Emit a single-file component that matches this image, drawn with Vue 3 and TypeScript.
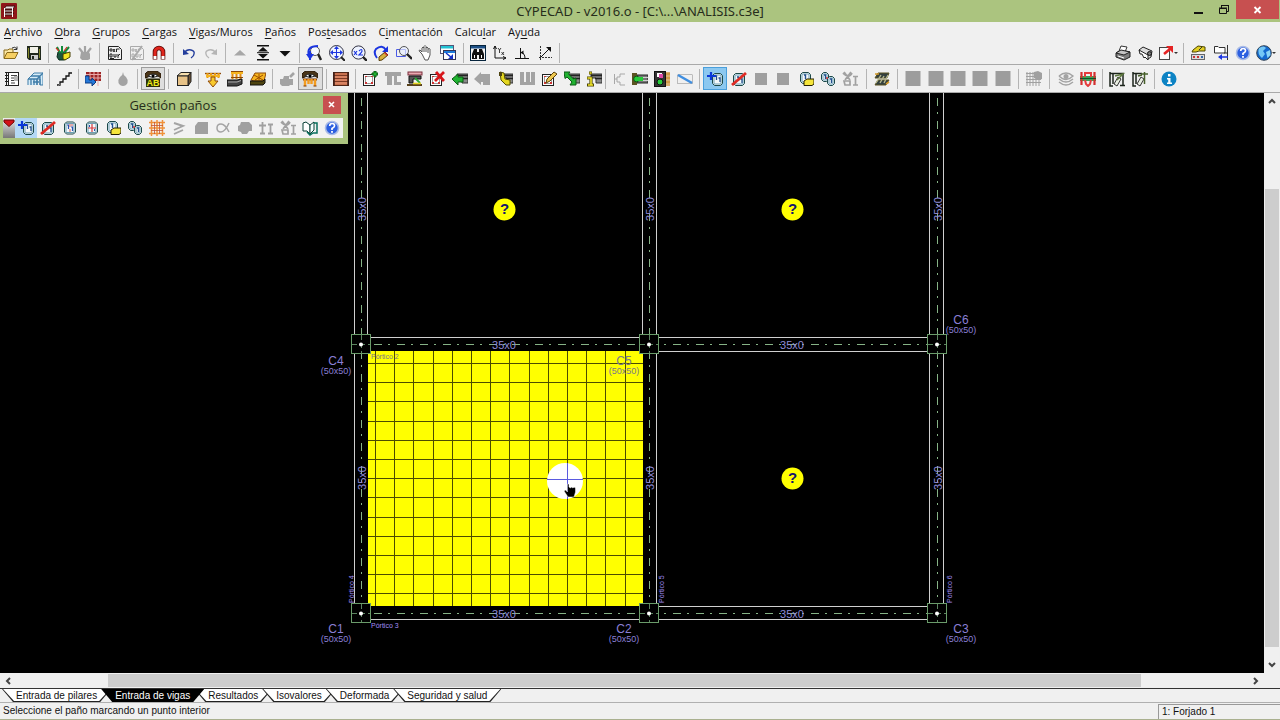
<script setup lang="ts">
import { ref } from 'vue'

interface Tool { icon: string; label: string; sep?: boolean; size?: string; on?: boolean; hot?: boolean; off?: boolean; drop?: boolean }

const K = '#111'
const G = '#a3a3a3'
const box = (x: number, y: number, w: number, h: number, fill: string, stroke = 'none') =>
  `<rect x="${x}" y="${y}" width="${w}" height="${h}" fill="${fill}" stroke="${stroke}"/>`
const line = (d: string, stroke = K, w = 1) => `<path d="${d}" fill="none" stroke="${stroke}" stroke-width="${w}"/>`
const area = (d: string, fill: string, stroke = 'none') => `<path d="${d}" fill="${fill}" stroke="${stroke}"/>`
const disc = (x: number, y: number, r: number, fill: string, stroke = 'none', w = 1) =>
  `<circle cx="${x}" cy="${y}" r="${r}" fill="${fill}" stroke="${stroke}" stroke-width="${w}"/>`
const word = (x: number, y: number, size: number, fill: string, str: string) =>
  `<text x="${x}" y="${y}" font-size="${size}" font-weight="700" text-anchor="middle" font-family="Liberation Sans, Arial, sans-serif" fill="${fill}">${str}</text>`

const slab = (x: number, y: number, w: number, h: number) =>
  area(`M${x + 2} ${y}h${w - 4}l2 2v${h - 4}l-2 2h-${w - 4}l-2-2v-${h - 4}z`, '#f4f8fa', '#1d4a4a') +
  line(`M${x + 1.5} ${y + 1.5}h${w - 3}v${h - 3}h-${w - 3}z`, '#6d9fb4')
const ones = (x: number, y: number, c: string) => line(`M${x} ${y + 1}h1.5v4M${x + 3.5} ${y + 3}h1.5v4`, c, 1.3)
const lens = (x: number, y: number, r: number) =>
  disc(x, y, r, '#f4f8ff', '#555', 1) + line(`M${x + r * 0.7} ${y + r * 0.7}L15 15`, '#222', 2.4)
const eye = area('M0 3Q2 0 5 0h7l4 3v4l-3-2Q8 2 3 6L0 7z', '#4a3518', '#2a1a08') + area('M3 5q5-4 10 0q-5 3-10 0z', '#fff', '#222') + disc(8, 4.8, 1.5, '#000')
const digger = (c: string) => area('M1 8h3l1-3h5v3h4v6h-3l-1 1H3l-2-2z', c) + line('M11 6l4-4', c, 2.6)
const beam = area('M5 3h11v9h-6V7H5z', '#8a8a8a', '#333') + line('M5 4.5h11M9 7.5h7', '#222', 1.4)
const sheet = box(1.5, 3.5, 11, 11, '#fdfdfd', '#222') + line('M3.500 5.500h7v7h-7z', '#999') +
  `<path d="M3 5h2v1H3zM9 5h2v1H9zM3 11h2v2H3zM9 11h2v2H9z" fill="#c33"/>`
const dxf = (c: string) => line('M1.500 1.500h10l3 3v10h-13z', c) + line('M3 4h2v2H3zM6 4l2 3M8 4L6 7M9.5 7V4h3M3 9h2v3H3zM7 9v3h2V9M11 9v4M11 11l2-2M3 13.500h4', c)

const icons: Record<string, string> = {
  open: area('M1 13V5h4l1-1h4v3', '#fbe7a5', '#8a6a1a') + area('M1 13.5L4 7.5h11l-3 6z', '#f6cf63', '#8a6a1a') + line('M9 3q3-2 5 1m0-2.500v3h-3', '#333'),
  save: area('M1 1h14v14H3L1 13z', '#20281c') + box(4, 2, 8, 6, '#f1f1e8') + box(5, 10, 7, 4.5, '#cfcfcf') + box(6, 11, 2, 3, '#20281c') + box(2, 3, 1, 10, '#83862b') + box(13, 4, 1, 9, '#83862b'),
  edit: area('M3 7h8v7l-2 1H4l-2-3z', '#1d5540', '#082a1a') + line('M5 8L2 2M7 8V1M9 8l5-6', '#138a3b', 2) + line('M1 3l3 3M12 2l-3 4', '#d12f20', 1.2) + area('M8 9l7-2v5l-5 3-2-1z', '#f4e324', '#473f00'),
  editOff: area('M4 7h8l1 2v5l-2 1H5l-2-2z', G) + line('M6 8L2 3M8 8V1M10 8l4-5', G, 2.2),
  dxf: dxf('#222'),
  dxfOff: dxf('#aaa') + line('M3 15L13 1', '#aaa', 2),
  magnet: line('M4 14.500V7a4 4 0 0 1 8 0v7.500', '#5b0b08', 4.600) + line('M4 11V7a4 4 0 0 1 8 0v4', '#e0251c', 3) + box(2.5, 11, 3, 3, '#fff') + box(10.5, 11, 3, 3, '#fff'),
  undo: line('M3 8q3-4 7-3q4 1 3 4q0 2-3 4', '#243e9c', 1.400) + area('M2 4l0 6 6-1z', '#243e9c'),
  redo: line('M13 8q-3-4-7-3q-4 1-3 4q0 2 3 4', '#b5b5b5', 1.400) + area('M14 4v6l-6-1z', '#b5b5b5'),
  upOff: area('M2 10.500L8 5l6 5.500z', '#a7a7a7'),
  levels: box(2, 0, 12, 1.500, K) + box(2, 14, 12, 1.500, K) + box(2, 7.200, 12, 1, K) + area('M8 2l5 4.500H3zM8 13.500l5-4.500H3z', K),
  down: area('M2.500 6h11L8 11.500z', K),
  zoomBack: lens(9, 6, 4.500) + line('M3 11Q0 1 12 1M4 6v9', '#1b35e0', 2) + area('M0 9h8l-4 6z', '#1b35e0'),
  zoomAll: disc(7.500, 7.500, 7, '#eef3ff', '#334') + area('M7.500 1l2.500 3H5zM7.500 14l2.500-3H5zM1 7.500L4 5v5zM14 7.500L11 5v5z', '#1b35e0') + line('M7.500 4v7M4 7.500h7', '#1b35e0') + line('M12 12l4 4', '#222', 2),
  zoom2: disc(7.500, 7.500, 6.600, '#eef3ff', '#334') + line('M3 6l3 4M6 6l-3 4M8 6q3-3 3 0q0 1-3 4h4', '#1b35e0', 1.200) + line('M12 12l4 4', '#222', 2.400),
  redraw: line('M13 5Q9-1 3 4q-3 4 1 9', '#1b35e0', 2) + area('M15 1v6H9z', '#1b35e0') + area('M6 12l6-5 3 3-6 5-3 .500z', '#d9b13b', '#553c08') + area('M11 8l1-1 3 3-1 1z', '#c33'),
  zoomWin: line('M.500 4.500h9v7h-9z', '#4b5be6') + disc(8, 6, 4.500, '#e8eeffaa', '#555') + line('M11 9l5 5', '#222', 2.400),
  hand: area('M4 9L2 7Q0 5 2 5l2 2V3q1-2 2 0V1.500q1-2 2 0V3q1-2 2 0v1q2-1 2 0v6l-2 5H7z', '#fff', '#555') + line('M6 3v4M8 3v4M10 4v4', '#555'),
  cascade: box(.5, .5, 13, 8, '#fff', '#557') + box(1, 1, 12, 2.500, '#22c2d4') + box(3.500, 5.500, 12, 9, '#fff', '#335') + box(4, 6, 11, 2, '#1e7bdb') + line('M6 8l6 5', '#1430c8', 1.500) + area('M13 14V9l-5 5z', '#1430c8'),
  find: box(.5, .5, 15, 15, '#f4f4f4', '#06243c') + box(1, 1, 14, 2.500, '#1c4f86') + area('M4 4h3v3h2V4h3l2 5v5H9v-4H7v4H2V9z', '#111') + box(4, 10, 1, 3, '#fff') + box(11, 10, 1, 3, '#fff'),
  axes: line('M3 1v12h11M1.500 4L3 1l1.500 3M11 11.500l3 1.500-3 1.500', K) + line('M6 3l1.500 2L9 3M7.500 5v3M9.500 7l2.500 3M12 7l-2.500 3', K, .8),
  angle: line('M1 13.500h14M6.500 3v10M7 7.500q4 .5 4 6', K) + area('M6.500 7.500l3-2v4z', K),
  vector: `<path d="M2 12.500h13M3.500 1v14" fill="none" stroke="#333" stroke-dasharray="2 1"/>` + line('M4 12l8-8', K) + area('M14 2v5L9 2z', K),
  print: area('M1 8l5-3 9 2v5l-6 3-8-3z', '#7d7d7d', '#222') + area('M4 6l2-5 6 1-2 5z', '#fff', '#333') + area('M1 8l8 2 6-3-9-2z', '#c4c4c4', '#222') + line('M3 11l6 2', '#fff'),
  plot: area('M2 5l4-3 9 4-1 6-3 2z', '#ddd', '#222') + area('M2 5l9 5v5L8 12l-1 1-2-4-2 0z', '#fff', '#222') + disc(12.500, 8.500, 2, '#777', '#111'),
  exportFile: box(1.500, 2.500, 10, 12, '#fafafa', '#444') + line('M6 9l6-5', '#e42323', 2.600) + area('M15 1v7L8 1z', '#e42323'),
  hardware: area('M3 5l5-4 7 1v4H9l-3 1H2z', '#e2cf24', '#4d4600') + box(1.500, 9.500, 13, 5, '#dadada', '#666') + box(3, 11, 2, 2, '#c33') + box(7, 11, 2, 2, '#c33') + box(11, 11, 2, 2, '#36a') + line('M9 5l3-3', '#333'),
  folderOut: area('M1.500 8V1.500H5l1 1h6V8z', '#fff', '#333') + line('M14.500 0v15', '#333') + line('M11 8h3', '#333') + line('M15 12H7', '#1b35e0', 1.500) + area('M5 12l4-3v6z', '#1b35e0'),
  help: disc(8, 8, 6.500, '#2c5fe0', '#a9bbe6', 1.600) + line('M5.700 6q0-2.500 2.500-2.500T10.500 6Q10.500 7 8 8.500V10', '#fff', 1.700) + box(7.100, 11, 1.800, 1.800, '#fff'),
  globe: disc(8, 8, 7.300, '#1469cf', '#345') + area('M3 3q5-3 7 0l-3 3 2 3-3 4Q1 9 3 3z', '#74c7f5') + area('M10 7l4-2 .5 5-3 3z', '#8bd4f5'),
  report: box(4.500, 1.500, 10, 13, '#fff', '#222') + line('M1 1.500h4M2.500 1v13M1 14.500h4M1 4.500h3M1 7.500h3M1 10.500h3', '#222') + line('M7 4.500h6M7 7h3M7 9.500h6M7 12h4', '#444', 1.200) + area('M10 5h4v5h-4z', '#b8b8b8'),
  building: area('M1 14V8l6-6h9v12h-3V8h-3v6', '#d6ecf8', '#3f7ca8') + line('M1 8h9l6-6M4 5h9M4 8v6M7 8v6M10 8v6M6 11h6M13 5v9', '#3f7ca8', 1.300),
  stairs: line('M1 14h3v-3h3V8h3V5h3V2h3', K, 1.300) + line('M2 15L4 13', '#777'),
  gridImport: box(1, 1, 15, 9, '#9d2424') + line('M1 3.500h15M1 7h15M5 1v9M9 1v13M13 1v14', '#e9a9a9') + area('M0 5h4v4h3V7l4 4-4 4v-3H0z', '#2578d8', '#0c3b80'),
  drop: area('M8 1q0 3 3 5 2.500 3 1.500 6-1.500 3-4.500 3t-4.500-3q-1-3 1.500-6Q8 4 8 1z', G),
  eyeText: eye + box(1, 7.500, 14, 8.500, '#2b2b08') + word(8, 15, 9, '#eeea1c', 'AB'),
  solid: area('M1 5l4-3.500h10L12 5z', '#f7dfae', '#222') + area('M12 5l3-3.500v9L12 15z', '#6e5436', '#222') + box(1.500, 5, 10.500, 9.500, '#e7c287', '#222'),
  loadDown: line('M0 2.500h16', '#8f4a08', 1.400) + line('M2.500 2v5M6 2v4M10 2v4M13.500 2v5', '#e79a12', 2) + line('M1 5h14', '#f7b51f', 2) + area('M6 6h4v4h3l-5 6-5-6h3z', '#f8c92d', '#8f4a08'),
  loadBeam: box(4, 1, 12, 2, '#f7b51f') + line('M5.500 3v5M9.500 3v5M13.500 3v5', '#e08a10', 2) + line('M4 .5h12M4 6.500h12', '#8f4a08') + area('M0 9h10l5-1v5l-5 2H0z', '#444', '#111') + line('M1 11h9l4-1.500', '#aaa'),
  loadSlab: area('M1 9l4-7h11l-2 8H4z', '#f7b51f', '#8f4a08') + line('M4 4l9 5M5 9l8-5M9 3v6', '#9b4d00') + area('M0 10h13l2-2v4l-2 2H0z', '#4d430f', '#111'),
  shovelOff: digger(G),
  shovel: eye + line('M1 8.500h14', '#803806', 2) + line('M3 8v7M6.500 8v5M9.500 8v5M13 8v7', '#f29b20', 2.400) + line('M1.500 15h3M11.500 15h3', '#803806'),
  bricks: box(.5, 1.500, 15, 13, '#c8714f', '#522718') + line('M1 4.500h14M1 7.500h14M1 10.500h14', '#7d3a24') + line('M1 6h14M1 9h14M1 12h14', '#f0a080', .8) + line('M1 1v14M15 1v14', '#402018', 1.600),
  sheetAdd: sheet + area('M10 2h2V0h2v2h2v2h-2v2h-2V4h-2z', '#20b331', '#0b5a15'),
  beamOff1: area('M0 1h16v4h-4v6h4v3H9V5H7v9H2V5H0z', G),
  beamMove: box(1, 1, 14, 3, '#e8aab2', '#7b2d3b') + area('M2 5h12v3H6v4H2z', '#555', '#111') + area('M0 13h15v2H0z', '#57411c') + line('M8 7l5 5', '#27a737', 1.800) + line('M6 12.500h8', '#e3d423', 1.600),
  sheetDel: sheet + line('M7 1l8 9M15 1l-9 9', '#d8161b', 2.800),
  beamLeft: beam + area('M0 8l6-5v3h5v5H6v3z', '#20b331', '#0b5a15'),
  beamLeftOff: area('M0 8l7-7v2h9v11H9v-3H7v3z', G),
  beamPick: beam + area('M3 1l4 1 1 6 5 1v5H9L4 9z', '#e4d721', '#514a00') + box(2, 1, 3, 4, '#4d430f'),
  beamOff2: area('M1 1h4v10h2V1h4v10h1V1h4v13H1z', G),
  sheetEdit: sheet + area('M5 12l1-4 7-7 3 2-7 7z', '#eec852', '#5b4108'),
  beamDiag: beam + area('M0 1h6L4.500 3l5 5L12 7v7H6l2-3-5-5-2 1.500z', '#20b331', '#0b5a15'),
  beamInfo: beam + line('M3 2h3M1 7h4v7M1 14h7', '#4d4600', 3.200) + line('M3.500 2h2M1.500 7H5v7M2 14h5', '#f1e52d', 1.600),
  clampOff: line('M4.500 3v10M7 6v5h3v3h5M7 6h3V3h5M4 8h3', '#a8a8a8'),
  wallBeam: box(5, 4, 11, 8, '#777', '#222') + line('M5 6.500h11M5 9.500h11', '#d0d0d0') + area('M0 2h5v12H0z', '#5b5322') + disc(4.500, 8, 2.800, '#26cd3a', '#0b5a15') + area('M5 6h6v4H5z', '#26cd3a'),
  wallTool: box(.5, .5, 11, 15, '#333', '#111') + box(3, 2, 5, 4, '#fff') + box(5, 3, 4, 4, '#dc4aa5') + disc(6, 11, 3, '#26cd3a', '#111') + line('M13 1v14M15 1v14M12 3h4M12 7h4M12 11h4', '#c9851f', 1.200),
  lineTool: line('M.500 3.500h15M.500 12.500h15M.500 4v9M15.500 4v9', '#bbb') + line('M1 4l14 8', '#3f8ee0', 2.400),
  slabAdd: slab(5.500, 2.500, 10, 12) + ones(8, 4, '#224f8e') + line('M4 1v8M0 5h9', '#0a38d8', 2.200),
  slabDel: slab(2.500, 2.500, 11, 12) + ones(6, 5, '#224f8e') + line('M1 14L15 2', '#df2b24', 2.800),
  slabOff: box(2, 2, 12, 12, '#9f9f9f'),
  slabJoin: slab(2.500, 2, 11, 12) + line('M5 5h1.500v4M9 7h1.500v4', '#2a51b0', 1.200) + line('M8 4v3M8 9v3M10 4v2', '#d35a5a'),
  slabSplit: slab(2.500, 2, 11, 12) + line('M8 4v8M4 8h8', '#d8393d', 1.200) + line('M5.500 5v2M10.500 9v2', '#2a51b0'),
  slabTag: slab(2.500, 1.500, 10, 11) + line('M6 4h1.500v4', '#224f8e', 1.400) + area('M6 10l3-2h7v5l-2 1.500H6z', '#f5e53b', '#262000'),
  slabCopy: slab(1.500, 1.500, 7, 9) + slab(7.500, 5.500, 7, 9) + line('M4 4h1.500v4M10 8h1.500v4', '#224f8e', 1.300) + disc(7, 7, 1, '#d33'),
  cutOff: line('M2 1l6 8M9 1L3 9M1 2q6 6 9 0', '#a1a1a1', 1.800) + line('M2 10h6v4H3zM11 5.500h5M13.500 5v9M11 14h5', '#a1a1a1', 1.700),
  stack: area('M1 7l3-5h11l-2 5zM1 14l3-5h11l-3 5z', '#33403f', '#5b5322') + line('M2 12l5-8M6 12l4-7M10 12l4-8', '#b6b78d', 1.400) + line('M1 3h4M12 13l3-2', '#d49a2b', 1.600),
  blankOff: box(.5, 0, 15, 15, '#9d9d9d'),
  meshOff: line('M1 1v14M4 1v14M7 1v14M10 1v14M13 1v14M0 2.500h15M0 5.500h15M0 8.500h15M0 11.500h15', '#a0a0a0') + area('M8 1l4-1 4 2v6l-4 1-4-2z', '#a0a0a0'),
  eyeOff: line('M1 5q7-6 14 0q-7 7-14 0M1 8q7 6 14 0M1 11q7 6 14 0', '#a3a3a3', 1.400) + disc(8, 5.500, 2.500, '#a3a3a3'),
  diagram: box(0, 5, 16, 5, '#35a457') + line('M1.500 1v13M14.500 1v13', '#d32f2f', 2.200) + line('M5 6V2h6v4M5 9l1 4 2 2 2-2 1-4', '#e43d3d', 2) + line('M0 7.500h16', '#184f28'),
  frameA: line('M1 1v14h3M1 2.500h14M14 2v13M11 14.500h5M4 3v10', '#1c241b', 1.500) + area('M5 13l4-7 3 2-4 7z', '#e9eee2', '#333') + line('M6 5l8-2-6 6', '#5c773c', 1.400),
  frameB: line('M1 1v14h3M1 2.500h9M4 3v10', '#1c241b', 1.500) + area('M5 13l4-7 3 2-4 7z', '#e9eee2', '#333') + line('M9 3h7M12.500 1v12M6 5l4-1', '#47602b', 1.500),
  info: disc(8, 8, 7.500, '#0d83c4') + box(7, 3, 2.500, 2.500, '#fff') + area('M6 7h3.500v4.500H11V13H6v-1.500h1.200V8.500H6z', '#fff'),
  rebar: line('M2.500 0v16M8 0v16M13.500 0v16M0 2.500h16M0 8h16M0 13.500h16', '#f0913a', 1.500) + line('M5.500 2v12M10.500 2v12M2 5.500h12M2 10.500h12', '#c5562e', .8),
  sortOff: line('M3 3l9 3-9 4M3 14l9-4', '#a4a4a4', 1.900),
  shapeOff: area('M5 2h10v12H2V6z', '#a0a0a0'),
  alphaOff: line('M14 3q-4 9-8 9-4 0-4-4t4-4q4 0 8 8', '#a4a4a4', 1.500),
  blobOff: area('M4 2h8l3 3v6h-3l-2 3H5l-1-2-3-1V6l2-1z', '#a0a0a0'),
  upperOff: line('M4.500 2v11M1 5.500h7M2 13.500h5M12.500 4v10M10 4.500h5M10 13.500h5', '#a0a0a0', 1.800),
  book: area('M1 3l3-1 4 3v9l-3-3H1z', '#fff', '#063f35') + area('M8 5l4-3v8l-4 4z', '#f4ffff', '#063f35') + line('M12 3h3v10h-4l-3 2-3-3', '#08705d', 1.500),
}

const t = (icon: string, label: string, opt: Partial<Tool> = {}): Tool => ({ icon, label, ...opt })
const s = (size = ''): Tool => ({ icon: '', label: '', sep: true, size })
const off = { off: true }

const mainTools: Tool[] = [
  t('open', 'Abrir'), t('save', 'Guardar'), s(), t('edit', 'Editar recursos'), t('editOff', 'Recursos de vistas', off), s(),
  t('dxf', 'Editar plantillas'), t('dxfOff', 'Capas', off), t('magnet', 'Referencias a objetos'), s(), t('undo', 'Deshacer'), t('redo', 'Rehacer', off), s(),
  t('upOff', 'Subir grupo', off), t('levels', 'Ir a grupo'), t('down', 'Bajar grupo'), s(),
  t('zoomBack', 'Vista previa'), t('zoomAll', 'Ventana completa'), t('zoom2', 'Vista doble'), t('redraw', 'Redibujar'), t('zoomWin', 'Marco de ventana'), t('hand', 'Mover'), t('cascade', 'Ventanas'), s(),
  t('find', 'Buscar'), t('axes', 'Coordenadas'), t('angle', 'Ortogonal'), t('vector', 'Captura'), s(),
]
const sideTools: Tool[] = [
  t('print', 'Imprimir'), t('plot', 'Planos'), t('exportFile', 'Exportar', { drop: true }), s(),
  t('hardware', 'Configuración'), t('folderOut', 'Carpetas'), t('help', 'Ayuda'), t('globe', 'Web', { drop: true }),
]
const modelTools: Tool[] = [
  t('report', 'Datos generales'), t('building', 'Vista 3D'), s(), t('stairs', 'Escaleras'), s(), t('gridImport', 'Importar'), s(), t('drop', 'Incendio', off), s(),
  t('eyeText', 'Ver referencias', { on: true }), s(), t('solid', 'Sólidos'), s(), t('loadDown', 'Cargas'), t('loadBeam', 'Cargas en vigas'), t('loadSlab', 'Cargas en paños'), s(),
  t('shovelOff', 'Zapatas', off), t('shovel', 'Ver cargas', { on: true }), s(), t('bricks', 'Muros'), s(),
  t('sheetAdd', 'Entrar viga'), t('beamOff1', 'Pórtico', off), t('beamMove', 'Mover viga'), t('sheetDel', 'Borrar viga'), t('beamLeft', 'Prolongar'), t('beamLeftOff', 'Voladizo', off),
  t('beamPick', 'Asignar'), t('beamOff2', 'Ménsula', off), t('sheetEdit', 'Editar viga'), t('beamDiag', 'Ajustar'), t('beamInfo', 'Información de viga'), s('thin'),
  t('clampOff', 'Articular', off), t('wallBeam', 'Empotrar'), t('wallTool', 'Muro'), t('lineTool', 'Línea'), s(),
  t('slabAdd', 'Entrar paño', { hot: true }), t('slabDel', 'Borrar paño'), t('slabOff', 'Copiar', off), t('slabOff', 'Pegar', off), t('slabTag', 'Datos de paño'), t('slabCopy', 'Copiar paño'), t('cutOff', 'Cortar', off), s('wide'),
  t('stack', 'Forjados'), s('wide'), t('blankOff', 'Vista 1', off), t('blankOff', 'Vista 2', off), t('blankOff', 'Vista 3', off), t('blankOff', 'Vista 4', off), t('blankOff', 'Vista 5', off), s('wide'),
  t('meshOff', 'Malla', off), s('wide'), t('eyeOff', 'Capas visibles', off), t('diagram', 'Esfuerzos'), s(), t('frameA', 'Armado superior'), t('frameB', 'Armado inferior'), s(), t('info', 'Información'),
]
const slabTools: Tool[] = [
  t('slabAdd', 'Entrar paño', { hot: true }), t('slabDel', 'Borrar paño'), t('slabJoin', 'Continuidad'), t('slabSplit', 'Dividir'), t('slabTag', 'Datos de paño'),
  t('slabCopy', 'Copiar paño'), t('rebar', 'Armadura base'), t('sortOff', 'Ordenar', off), t('shapeOff', 'Ábaco', off), t('alphaOff', 'Ángulo', off), t('blobOff', 'Contorno', off),
  t('upperOff', 'Sumar', off), t('cutOff', 'Cortar', off), t('book', 'Manual'), t('help', 'Ayuda'),
]

const menus: [string, string, string][] = [
  ['', 'A', 'rchivo'], ['', 'O', 'bra'], ['', 'G', 'rupos'], ['', 'C', 'argas'], ['', 'V', 'igas/Muros'],
  ['', 'P', 'años'], ['Pos', 't', 'esados'], ['C', 'i', 'mentación'], ['Calcu', 'l', 'ar'], ['Ay', 'u', 'da'],
]
const tabs = ['Entrada de pilares', 'Entrada de vigas', 'Resultados', 'Isovalores', 'Deformada', 'Seguridad y salud']
const activeTab = ref(1)

const colX = [361, 649, 937]
const rowY = [344, 613]
const gridX = Array.from({ length: 14 }, (_, i) => Math.round(375 + i * 19.2))
const gridY = Array.from({ length: 13 }, (_, i) => Math.round(363 + i * 19.2))
const columns = [
  { name: 'C4', x: 336, y: 365 }, { name: 'C5', x: 624, y: 365 }, { name: 'C6', x: 961, y: 324 },
  { name: 'C1', x: 336, y: 633 }, { name: 'C2', x: 624, y: 633 }, { name: 'C3', x: 961, y: 633 },
]
const hBeams = [[504, 349], [792, 349], [504, 618], [792, 618]]
const vBeams = [[366, 209], [654, 209], [942, 209], [366, 478], [654, 478], [942, 478]]
const pending = [[504, 209], [792, 209], [792, 478]]
</script>

<template>
  <div class="window">
    <header class="titlebar">
      <svg class="logo" viewBox="0 0 16 16" aria-hidden="true">
        <rect width="16" height="16" rx="1" fill="#8f1519" />
        <path d="M5 3h9l-2 3H3zM4 7h9l-2 2H3zM4 10h9l-2 2H3z" fill="#e8dede" stroke="#3c1010" />
        <path d="M3.500 5v9M11.500 5v9" stroke="#fff" fill="none" />
      </svg>
      <h1>CYPECAD - v2016.o - [C:\...\ANALISIS.c3e]</h1>
      <div class="controls">
        <button type="button" aria-label="Minimizar"><svg viewBox="0 0 12 12"><path d="M1 9h9" stroke="#111" stroke-width="2" /></svg></button>
        <button type="button" aria-label="Restaurar"><svg viewBox="0 0 12 12"><path d="M1.500 4.500h7v5h-7zM3.500 4V1.500h7v6H9M1 4h8M3 1.500h8" stroke="#111" fill="none" /></svg></button>
        <button type="button" class="close" aria-label="Cerrar"><svg viewBox="0 0 12 12"><path d="M2.500 3l6 6M8.500 3l-6 6" stroke="#fff" stroke-width="1.800" /></svg></button>
      </div>
    </header>

    <nav class="menubar" aria-label="Menú">
      <button v-for="m in menus" :key="m.join('')" type="button">{{ m[0] }}<u>{{ m[1] }}</u>{{ m[2] }}</button>
    </nav>

    <div class="toolbar">
      <div class="strip strip-main">
        <template v-for="(x, i) in mainTools" :key="i">
          <span v-if="x.sep" class="sep"></span>
          <button v-else type="button" :aria-label="x.label" :disabled="x.off"><svg viewBox="0 0 16 16" v-html="icons[x.icon]"></svg></button>
        </template>
      </div>
      <div class="strip strip-side">
        <template v-for="(x, i) in sideTools" :key="i">
          <span v-if="x.sep" class="sep"></span>
          <button v-else type="button" :class="{ drop: x.drop }" :aria-label="x.label"><svg viewBox="0 0 16 16" v-html="icons[x.icon]"></svg></button>
        </template>
      </div>
    </div>
    <div class="toolbar second">
      <div class="strip strip-model">
        <template v-for="(x, i) in modelTools" :key="i">
          <span v-if="x.sep" class="sep" :class="x.size"></span>
          <button v-else type="button" :class="{ on: x.on, hot: x.hot }" :aria-label="x.label" :disabled="x.off"><svg viewBox="0 0 16 16" v-html="icons[x.icon]"></svg></button>
        </template>
      </div>
    </div>

    <main class="workspace">
      <svg class="plan" viewBox="0 93 1264 580" preserveAspectRatio="xMidYMid meet">
        <rect x="368" y="351" width="275" height="255" fill="#ffff00" />
        <g stroke="#4c4c00" stroke-width="1" shape-rendering="crispEdges">
          <line v-for="x in gridX" :key="'x' + x" :x1="x" :x2="x" y1="351" y2="606" />
          <line v-for="y in gridY" :key="'y' + y" x1="368" x2="643" :y1="y" :y2="y" />
        </g>
        <g class="edges">
          <path d="M354.500 93V334M354.500 354V604M367.500 93V334M642.500 93V334M656.500 93V334M656.500 354V604M929.500 93V334M943.500 93V334M929.500 354V604M943.500 354V604" />
          <path d="M371 337.500H640M659 337.500H927M659 351.500H927M659 606.500H927M371 619.500H640M659 619.500H927" />
        </g>
        <g class="axes">
          <line v-for="x in colX" :key="'a' + x" :x1="x + .5" :x2="x + .5" y1="98" y2="613" />
          <line v-for="y in rowY" :key="'b' + y" x1="374" x2="937" :y1="y + .5" :y2="y + .5" />
        </g>
        <g v-for="y in rowY" :key="'r' + y">
          <g v-for="x in colX" :key="'c' + x">
            <rect :x="x - 9.500" :y="y - 9.500" width="19" height="19" fill="#000" stroke="#6a9c6a" />
            <path :d="`M${x - 9} ${y + .5}h18M${x + .5} ${y - 9}v18`" stroke="#5c8560" stroke-dasharray="5 3" />
            <circle :cx="x" :cy="y + .5" r="2" fill="#fff" />
          </g>
        </g>
        <g class="section">
          <text v-for="(b, i) in hBeams" :key="'h' + i" :x="b[0]" :y="b[1]">35x0</text>
          <text v-for="(b, i) in vBeams" :key="'v' + i" :transform="`translate(${b[0]} ${b[1]}) rotate(-90)`">35x0</text>
        </g>
        <g v-for="c in columns" :key="c.name" class="column" :class="{ faded: c.name === 'C5' }">
          <text :x="c.x" :y="c.y">{{ c.name }}</text>
          <text class="size" :x="c.x" :y="c.y + 9">(50x50)</text>
        </g>
        <g class="frame">
          <text class="faded" x="371" y="359">Pórtico 2</text>
          <text x="371" y="628">Pórtico 3</text>
          <text transform="translate(354 603) rotate(-90)">Pórtico 4</text>
          <text transform="translate(664 603) rotate(-90)">Pórtico 5</text>
          <text transform="translate(952 603) rotate(-90)">Pórtico 6</text>
        </g>
        <g v-for="(p, i) in pending" :key="'p' + i">
          <circle :cx="p[0] + .5" :cy="p[1] + .5" r="11" fill="#ffff00" />
          <text class="query" :x="p[0] + .5" :y="p[1] + 5">?</text>
        </g>
        <circle cx="565" cy="481" r="18" fill="#fff" />
        <path d="M547 479.500h36M567.500 463v36" stroke="#5a5ae0" fill="none" />
        <path d="M567.500 484v8l-2-2-1.500 1 4 6h6l1.500-5v-4l-1.500-1-1 1-1.500-1-1 1-1.500-1v-3z" fill="#000" stroke="#fff" stroke-width=".5" />
      </svg>

      <div class="vscroll">
        <button type="button" aria-label="Subir"><svg viewBox="0 0 8 8"><path d="M1 6l3-3 3 3" /></svg></button>
        <div class="track"><i class="before"></i><i class="thumb"></i><i class="after"></i></div>
        <button type="button" aria-label="Bajar"><svg viewBox="0 0 8 8"><path d="M1 2l3 3 3-3" /></svg></button>
      </div>

      <section class="palette" aria-label="Gestión paños">
        <div class="palette-head">
          <h2>Gestión paños</h2>
          <button type="button" aria-label="Cerrar panel"><svg viewBox="0 0 10 10"><path d="M2 2l5 5M7 2L2 7" stroke="#fff" stroke-width="1.600" /></svg></button>
        </div>
        <div class="palette-tools">
          <span class="grip"><svg viewBox="0 0 12 8"><path d="M1 1h10v2L6 7.500 1 3z" fill="#d31217" stroke="#6b0709" /></svg></span>
          <button v-for="(x, i) in slabTools" :key="i" type="button" :class="{ hot: x.hot }" :aria-label="x.label" :disabled="x.off"><svg viewBox="0 0 16 16" v-html="icons[x.icon]"></svg></button>
        </div>
      </section>
    </main>

    <div class="hscroll">
      <button type="button" aria-label="Izquierda"><svg viewBox="0 0 8 8"><path d="M6 1L3 4l3 3" /></svg></button>
      <div class="track"><i class="before"></i><i class="thumb"></i><i class="after"></i></div>
      <button type="button" aria-label="Derecha"><svg viewBox="0 0 8 8"><path d="M2 1l3 3-3 3" /></svg></button>
      <span class="corner"></span>
    </div>

    <div class="tabs" role="tablist">
      <button v-for="(name, i) in tabs" :key="name" type="button" role="tab" :aria-selected="i === activeTab" :class="{ active: i === activeTab }" @click="activeTab = i"><span>{{ name }}</span></button>
    </div>

    <footer class="status">
      <span>Seleccione el paño marcando un punto interior</span>
      <span class="floor">1: Forjado 1</span>
    </footer>
  </div>
</template>

<style>
html, body { margin: 0; background: #f0f0f0; }
</style>

<style scoped>
.window { display: flex; flex-direction: column; height: 100vh; overflow: hidden; background: #f0f0f0; color: #111; font-family: "Open Sans", sans-serif; box-sizing: border-box; }
button { border: 0; padding: 0; margin: 0; background: none; font: inherit; color: inherit; display: flex; align-items: center; justify-content: center; box-sizing: border-box; }
svg { display: block; }
h1, h2 { margin: 0; font-weight: 400; color: #262d1b; }

.titlebar { flex: 0 0 22px; display: grid; grid-template-columns: 96px 1fr 96px; background: #abc47f; }
.logo { width: 16px; height: 16px; margin: 3px 1px; }
h1 { font-family: "Noto Sans", sans-serif; font-size: 13px; line-height: 22px; text-align: center; white-space: nowrap; }
.controls { display: flex; align-items: flex-start; justify-content: flex-end; padding-right: 1px; }
.controls button { width: 25px; height: 19px; }
.controls svg { width: 12px; height: 12px; }
.controls .close { width: 43px; background: #c75050; }

.menubar { flex: 0 0 19px; display: flex; gap: 12px; padding-left: 4px; font-size: 11px; line-height: 17px; }
.menubar button { display: block; white-space: pre; }
.menubar u { text-underline-offset: 2px; }

.toolbar { flex: 0 0 24px; display: flex; justify-content: space-between; border-bottom: 1px solid #a9a9a9; box-sizing: border-box; }
.second { flex-basis: 28px; }
.strip { display: flex; align-items: center; min-width: 0; }
.strip-main { flex: 0 1 563px; }
.strip-side { flex: 0 1 166px; padding-right: 2px; }
.strip-model { flex: 0 1 1179px; padding-left: 1px; }
.strip button { flex: 1 1 0; min-width: 0; height: 23px; }
.strip svg { width: 16px; height: 16px; flex: none; }
.sep { flex: 0 0 7px; height: 20px; background: linear-gradient(#b4b4b4, #b4b4b4) 3px 0 / 1px 100% no-repeat; }
.sep.thin { flex-basis: 1px; background: #b4b4b4; }
.sep.wide { flex-basis: 9px; background-position: 4px 0; }
.strip .on { background: #dedede; border: 1px solid #9c9c9c; }
.strip .hot { background: #8cc8f0; border: 1px solid #4a9fdc; }
.strip .drop { flex: 1.1 1 0; }
.drop::after { content: ""; border: 2px solid transparent; border-top-color: #333; border-bottom: 0; }

.workspace { flex: 1 1 0; min-height: 0; position: relative; display: flex; background: #000; }
.plan { flex: 1 1 0; min-width: 0; height: 100%; background: #000; font-family: "Liberation Sans", Arial, sans-serif; }
.edges path { fill: none; stroke: #d0d0d0; }
.axes line { stroke: #86b386; stroke-dasharray: 8 6 2 7; }
.section text { fill: #8f8bd8; font-size: 11px; text-anchor: middle; }
.column text { fill: #8a7fd6; font-size: 12px; text-anchor: middle; }
.column .size { font-size: 9px; }
.column.faded text, .frame .faded { fill: #77778c; }
.frame text { fill: #a08ef5; font-size: 7px; }
.query { fill: #16166e; font-size: 15px; font-weight: 700; text-anchor: middle; }

.vscroll { flex: 0 0 16px; display: flex; flex-direction: column; background: #f0f0f0; }
.vscroll button, .hscroll button { flex: 0 0 16px; }
.vscroll svg, .hscroll svg { width: 8px; height: 8px; fill: none; stroke: #444; stroke-width: 2; }
.track { flex: 1; display: flex; flex-direction: inherit; }
.thumb { background: #cdcdcd; }
.vscroll .before { flex: 80; }
.vscroll .thumb { flex: 458; margin: 0 1px; }
.vscroll .after { flex: 10; }

.hscroll { flex: 0 0 16px; display: flex; background: #f0f0f0; border-bottom: 1px solid #333; box-sizing: border-box; }
.hscroll .before { flex: 92; }
.hscroll .thumb { flex: 1033; margin: 1px 0; }
.hscroll .after { flex: 107; }
.corner { flex: 0 0 16px; }

.palette { position: absolute; left: 0; top: 0; width: 348px; height: 51px; box-sizing: border-box; padding: 0 5px 0 3px; background: #abc47f; }
.palette-head { display: grid; grid-template-columns: 20px 1fr 20px; height: 25px; }
h2 { grid-column: 2; font-size: 13px; line-height: 25px; text-align: center; }
.palette-head button { width: 18px; height: 18px; margin-top: 3px; background: #c75050; }
.palette-head svg { width: 10px; height: 10px; }
.palette-tools { display: flex; height: 20px; background: #f2f2f2; }
.palette-tools button { flex: 1 1 0; min-width: 0; }
.palette-tools button svg { width: 16px; height: 16px; flex: none; }
.palette-tools .hot { background: #b4d8f5; }
.grip { flex: 0 0 12px; background: linear-gradient(#eee, #777); }
.grip svg { width: 12px; height: 10px; }

.tabs { flex: 0 0 14px; display: flex; padding-left: 2px; border-bottom: 1px solid #b0b0b0; box-sizing: border-box; font: 10px/13px "Liberation Sans", Arial, sans-serif; }
.tabs button { position: relative; padding: 0 14px; margin-right: -10px; background: #222; clip-path: polygon(0 0, 100% 0, calc(100% - 11px) 100%, 11px 100%); white-space: nowrap; }
.tabs button::before { content: ""; position: absolute; inset: 0; background: #fff; clip-path: polygon(1px 0, calc(100% - 1px) 0, calc(100% - 12px) calc(100% - 1px), 12px calc(100% - 1px)); }
.tabs span { position: relative; }
.tabs .active { z-index: 1; color: #fff; background: #000; }
.tabs .active::before { background: #000; }

.status { flex: 0 0 17px; display: flex; justify-content: space-between; align-items: stretch; padding-left: 3px; border-bottom: 1px solid #a9b08f; box-sizing: border-box; font: 10px/16px "Liberation Sans", Arial, sans-serif; white-space: nowrap; }
.floor { flex: 0 0 118px; margin-top: 1px; padding-left: 3px; border-left: 1px solid #999; border-top: 1px solid #999; line-height: 14px; }
</style>
